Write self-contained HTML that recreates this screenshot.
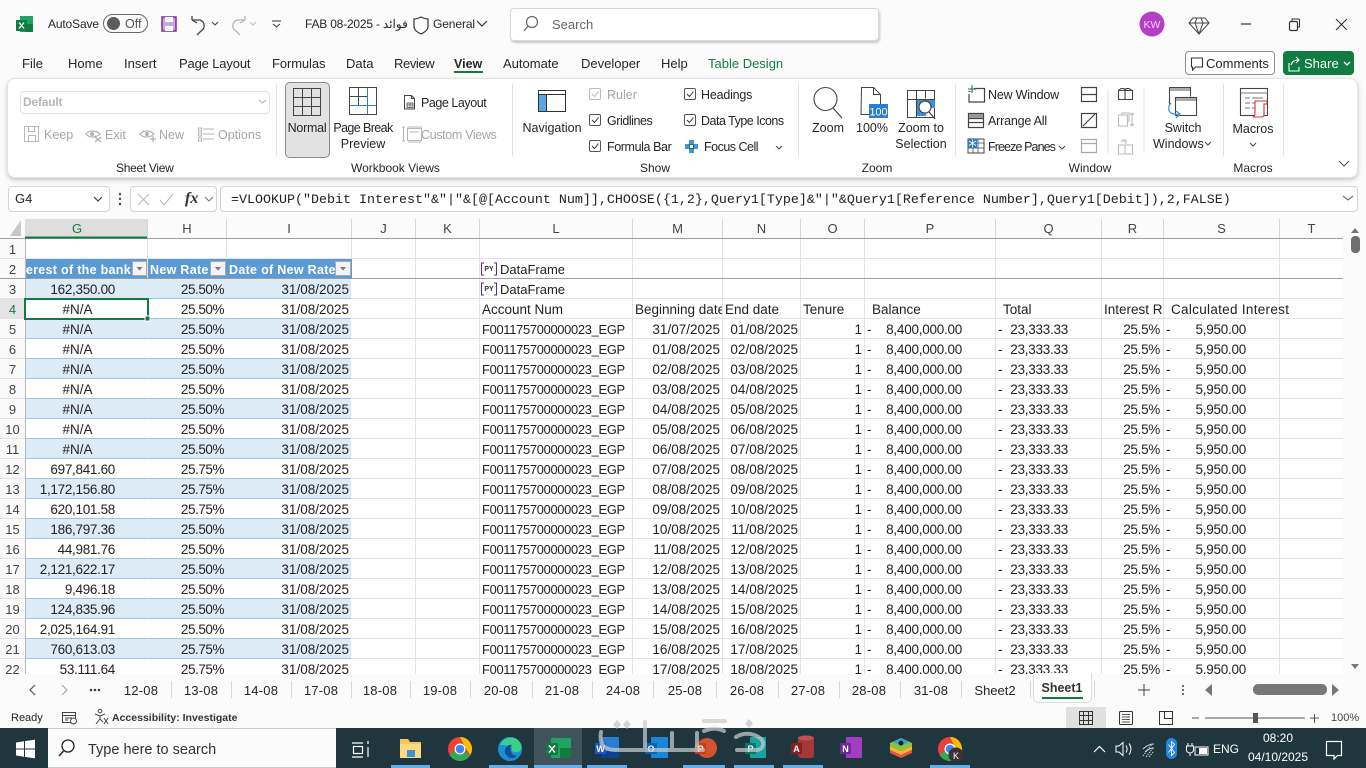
<!DOCTYPE html>
<html><head><meta charset="utf-8"><style>
html,body{margin:0;padding:0;width:1366px;height:768px;overflow:hidden;background:#fbfbfb;font-family:"Liberation Sans","Noto Sans CJK SC",sans-serif;color:#262626}
.t{position:absolute;white-space:nowrap;font-size:13px;line-height:16px}
.c{transform:translateX(-50%);text-align:center}
.g{color:#a6a6a6}
.s{font-size:12px}
.b{position:absolute;box-sizing:border-box}
.ch{position:absolute;top:219px;height:19px;line-height:20px;font-size:13px;text-align:center;color:#444;border-right:1px solid #d6d6d6;box-sizing:content-box}
#grid{position:absolute;left:0;top:239px;width:1343px;height:435px;overflow:hidden;background:#fff}
table{border-collapse:separate;border-spacing:0;table-layout:fixed;width:1344px;font-size:13.5px;color:#222}
td{height:17px;padding:2px 2px 0 2px;border-right:1px solid #e1e3e6;border-bottom:1px solid #e1e3e6;line-height:17px;white-space:nowrap;overflow:hidden;box-sizing:content-box;text-align:left}
td:nth-child(1){text-align:center;color:#444;border-right:1px solid #b8b8b8;background:#fafafa;font-size:13px;padding:2px 0 0 0}
td:nth-child(2){text-align:right;padding:2px 32px 0 0;letter-spacing:-.3px}
td.n{text-align:center!important;padding:2px 18px 0 0!important;letter-spacing:0}
td:nth-child(3){text-align:right;letter-spacing:-.45px}
td:nth-child(4){text-align:right}
tr.a td:nth-child(n+2):nth-child(-n+4){background:#ddebf7}
tr.r td:nth-child(n+2):nth-child(-n+4){border-bottom:1px solid #9dc3e6;border-right-color:#fff}
tr.r td:nth-child(2),tr.r td:nth-child(3){border-right:1px solid #e1e3e6}
tr.r.a td:nth-child(2),tr.r.a td:nth-child(3){border-right-color:#ddebf7}
tr.r td:nth-child(4){border-right:1px solid #9dc3e6}
td:nth-child(7){font-size:12.9px;letter-spacing:-.3px;padding-left:2px;padding-right:0}
td:nth-child(8),td:nth-child(9),td:nth-child(10){text-align:right}
td:nth-child(11){text-align:right;padding-right:33px;letter-spacing:-.25px}
td:nth-child(12){text-align:right;padding-right:33px;letter-spacing:-.25px}
td:nth-child(13){text-align:right;padding-right:3px;letter-spacing:-.3px}
td:nth-child(14){text-align:right;padding-right:33px;letter-spacing:-.25px}
td i{float:left;font-style:normal;margin-left:0}
svg{position:absolute;left:0;top:0}
</style></head><body>

<!-- Ribbon panel -->
<div class="b" style="left:7px;top:78px;width:1351px;height:100px;background:#fff;border:1px solid #e4e4e4;border-radius:8px;box-shadow:0 2px 4px rgba(0,0,0,.22)"></div>
<div class="b" style="left:510px;top:8px;width:369px;height:33px;background:#fff;border:1px solid #d8d8d8;border-radius:4px;box-shadow:1px 2px 2px rgba(0,0,0,.2)"></div>
<div class="b" style="left:20px;top:91px;width:250px;height:23px;background:#fff;border:1px solid #e0e0e0;border-radius:4px"></div>
<div class="b" style="left:285px;top:82px;width:45px;height:76px;background:#e2e2e2;border:1px solid #8a8a8a;border-radius:5px"></div>
<div class="b" style="left:1185px;top:51px;width:90px;height:24px;background:#fff;border:1px solid #8f8f8f;border-radius:4px"></div>
<div class="b" style="left:1283px;top:51px;width:71px;height:24px;background:#107c41;border-radius:4px"></div>

<!-- Title -->
<div class="t" style="left:48px;top:16px;font-size:12px;letter-spacing:-.15px">AutoSave</div>
<div class="t" style="left:125px;top:16px;font-size:12.5px;color:#555">Off</div>
<div class="t" style="left:305px;top:16px;font-size:12px;letter-spacing:-.2px">FAB 08-2025 - فوائد</div>
<div class="t" style="left:433px;top:16px;font-size:12px;letter-spacing:-.1px">General</div>
<div class="t" style="left:552px;top:17px;color:#666">Search</div>

<!-- Tabs -->
<div class="t" style="left:22px;top:56px">File</div>
<div class="t" style="left:68px;top:56px">Home</div>
<div class="t" style="left:124px;top:56px">Insert</div>
<div class="t" style="left:179px;top:56px;letter-spacing:-.15px">Page Layout</div>
<div class="t" style="left:272px;top:56px;letter-spacing:-.1px">Formulas</div>
<div class="t" style="left:346px;top:56px">Data</div>
<div class="t" style="left:394px;top:56px;letter-spacing:-.4px">Review</div>
<div class="t" style="left:454px;top:56px;font-weight:bold;font-size:12.5px">View</div>
<div class="b" style="left:454px;top:71px;width:29px;height:2px;background:#107c41"></div>
<div class="t" style="left:503px;top:56px">Automate</div>
<div class="t" style="left:581px;top:56px">Developer</div>
<div class="t" style="left:661px;top:56px">Help</div>
<div class="t" style="left:708px;top:56px;color:#107c41">Table Design</div>
<div class="t" style="left:1206px;top:56px">Comments</div>
<div class="t" style="left:1304px;top:56px;color:#fff">Share</div>

<!-- Ribbon text -->
<div class="t g" style="left:23px;top:94px;font-size:12px;font-weight:bold;color:#b5b5b5;letter-spacing:-.2px">Default</div>
<div class="t g" style="left:44px;top:127px;font-size:12.5px">Keep</div>
<div class="t g" style="left:105px;top:127px;font-size:12.5px">Exit</div>
<div class="t g" style="left:159px;top:127px;font-size:12.5px">New</div>
<div class="t g" style="left:218px;top:127px;font-size:12.5px">Options</div>
<div class="t s" style="left:116px;top:160px;letter-spacing:-.3px">Sheet View</div>
<div class="t s" style="left:351px;top:160px">Workbook Views</div>
<div class="t s c" style="left:655px;top:160px">Show</div>
<div class="t s c" style="left:877px;top:160px">Zoom</div>
<div class="t s c" style="left:1090px;top:160px">Window</div>
<div class="t s c" style="left:1253px;top:160px">Macros</div>
<div class="t c" style="left:307px;top:120px;font-size:12.5px;letter-spacing:-.25px">Normal</div>
<div class="t c" style="left:363px;top:120px;font-size:12.5px;letter-spacing:-.6px">Page Break</div>
<div class="t c" style="left:363px;top:136px;font-size:12.5px">Preview</div>
<div class="t" style="left:421px;top:95px;font-size:12.5px;letter-spacing:-.45px">Page Layout</div>
<div class="t g" style="left:421px;top:127px;font-size:12.5px;letter-spacing:-.35px">Custom Views</div>
<div class="t c" style="left:552px;top:120px;font-size:12.5px">Navigation</div>
<div class="t g" style="left:607px;top:87px;font-size:12.5px">Ruler</div>
<div class="t" style="left:607px;top:113px;font-size:12.5px;letter-spacing:-.45px">Gridlines</div>
<div class="t" style="left:607px;top:139px;font-size:12.5px;letter-spacing:-.4px">Formula Bar</div>
<div class="t" style="left:701px;top:87px;font-size:12.5px;letter-spacing:-.2px">Headings</div>
<div class="t" style="left:701px;top:113px;font-size:12.5px;letter-spacing:-.5px">Data Type Icons</div>
<div class="t" style="left:704px;top:139px;font-size:12.5px;letter-spacing:-.5px">Focus Cell</div>
<div class="t c" style="left:828px;top:120px;font-size:12.5px">Zoom</div>
<div class="t c" style="left:872px;top:120px;font-size:12.5px">100%</div>
<div class="t c" style="left:921px;top:120px;font-size:12.5px">Zoom to</div>
<div class="t c" style="left:921px;top:136px;font-size:12.5px">Selection</div>
<div class="t" style="left:988px;top:87px;font-size:12.5px;letter-spacing:-.2px">New Window</div>
<div class="t" style="left:988px;top:113px;font-size:12.5px;letter-spacing:-.2px">Arrange All</div>
<div class="t" style="left:988px;top:139px;font-size:12.5px;letter-spacing:-.9px">Freeze Panes</div>
<div class="t c" style="left:1183px;top:120px;font-size:12.5px">Switch</div>
<div class="t" style="left:1153px;top:136px;font-size:12.5px">Windows</div>
<div class="t c" style="left:1253px;top:121px;font-size:12.5px">Macros</div>

<!-- Formula bar -->
<div class="b" style="left:8px;top:186px;width:102px;height:26px;background:#fff;border:1px solid #d4d4d4;border-radius:4px"></div>
<div class="b" style="left:130px;top:186px;width:87px;height:26px;background:#fff;border:1px solid #d4d4d4;border-radius:4px"></div>
<div class="b" style="left:220px;top:186px;width:1138px;height:26px;background:#fff;border:1px solid #d4d4d4;border-radius:4px"></div>
<div class="t" style="left:15px;top:191px;font-size:13px">G4</div>
<div class="t" style="left:185px;top:190px;font:italic bold 16px/18px 'Liberation Serif',serif;color:#333">fx</div>
<div class="t" style="left:231px;top:193px;font:13.33px/16px 'Liberation Mono',monospace;color:#222">=VLOOKUP("Debit Interest"&amp;"|"&amp;[@[Account Num]],CHOOSE({1,2},Query1[Type]&amp;"|"&amp;Query1[Reference Number],Query1[Debit]),2,FALSE)</div>

<!-- Column headers -->
<div class="b" style="left:0;top:218px;width:1366px;height:21px;background:#fbfbfb"></div>
<div class="ch" style="left:25px;width:104px;padding-right:18px;background:#dedede;color:#107c41">G</div>
<div class="ch" style="left:148px;width:78px">H</div>
<div class="ch" style="left:227px;width:124px">I</div>
<div class="ch" style="left:352px;width:63px">J</div>
<div class="ch" style="left:416px;width:63px">K</div>
<div class="ch" style="left:480px;width:152px">L</div>
<div class="ch" style="left:633px;width:89px">M</div>
<div class="ch" style="left:723px;width:77px">N</div>
<div class="ch" style="left:801px;width:63px">O</div>
<div class="ch" style="left:865px;width:130px">P</div>
<div class="ch" style="left:996px;width:105px">Q</div>
<div class="ch" style="left:1102px;width:61px">R</div>
<div class="ch" style="left:1164px;width:115px">S</div>
<div class="ch" style="left:1280px;width:63px;border-right:0">T</div>

<!-- Grid -->
<div id="grid"><table>
<colgroup><col style="width:26px"><col style="width:122px"><col style="width:79px"><col style="width:125px"><col style="width:64px"><col style="width:64px"><col style="width:153px"><col style="width:90px"><col style="width:78px"><col style="width:64px"><col style="width:131px"><col style="width:106px"><col style="width:62px"><col style="width:116px"><col style="width:64px"></colgroup>
<tr><td>1</td><td></td><td></td><td></td><td></td><td></td><td></td><td></td><td></td><td></td><td></td><td></td><td></td><td></td><td></td></tr>
<tr><td>2</td><td style="background:#5b9bd5;border-bottom-color:#5b9bd5"></td><td style="background:#5b9bd5;border-right-color:#5b9bd5;border-bottom-color:#5b9bd5"></td><td style="background:#5b9bd5;border-right-color:#5b9bd5;border-bottom-color:#5b9bd5"></td><td></td><td></td><td style="padding-left:20px;font-size:13px;letter-spacing:0">DataFrame</td><td></td><td></td><td></td><td></td><td></td><td></td><td></td><td></td></tr>
<tr class="r a"><td>3</td><td>162,350.00</td><td>25.50%</td><td>31/08/2025</td><td></td><td></td><td style="padding-left:20px;font-size:13px;letter-spacing:0">DataFrame</td><td></td><td></td><td></td><td></td><td></td><td></td><td></td><td></td></tr>
<tr class="r"><td style="background:#e4e4e4;color:#107c41">4</td><td class="n">#N/A</td><td>25.50%</td><td>31/08/2025</td><td></td><td></td><td style="font-size:13.5px;letter-spacing:0">Account Num</td><td style="text-align:left">Beginning date</td><td style="text-align:left">End date</td><td style="text-align:left">Tenure</td><td style="text-align:left;padding-left:7px;padding-right:0;letter-spacing:0">Balance</td><td style="text-align:left;padding-left:7px;padding-right:0;letter-spacing:0">Total</td><td style="text-align:left;padding-right:0;letter-spacing:0">Interest Rate</td><td style="text-align:left;overflow:visible;padding-left:7px;padding-right:0;letter-spacing:.3px">Calculated Interest</td><td></td></tr>
<tr class="r a"><td>5</td><td class="n">#N/A</td><td>25.50%</td><td>31/08/2025</td><td></td><td></td><td>F001175700000023_EGP</td><td>31/07/2025</td><td>01/08/2025</td><td>1</td><td><i>-</i>8,400,000.00</td><td><i>-</i>23,333.33</td><td>25.5%</td><td><i>-</i>5,950.00</td><td></td></tr>
<tr class="r"><td>6</td><td class="n">#N/A</td><td>25.50%</td><td>31/08/2025</td><td></td><td></td><td>F001175700000023_EGP</td><td>01/08/2025</td><td>02/08/2025</td><td>1</td><td><i>-</i>8,400,000.00</td><td><i>-</i>23,333.33</td><td>25.5%</td><td><i>-</i>5,950.00</td><td></td></tr>
<tr class="r a"><td>7</td><td class="n">#N/A</td><td>25.50%</td><td>31/08/2025</td><td></td><td></td><td>F001175700000023_EGP</td><td>02/08/2025</td><td>03/08/2025</td><td>1</td><td><i>-</i>8,400,000.00</td><td><i>-</i>23,333.33</td><td>25.5%</td><td><i>-</i>5,950.00</td><td></td></tr>
<tr class="r"><td>8</td><td class="n">#N/A</td><td>25.50%</td><td>31/08/2025</td><td></td><td></td><td>F001175700000023_EGP</td><td>03/08/2025</td><td>04/08/2025</td><td>1</td><td><i>-</i>8,400,000.00</td><td><i>-</i>23,333.33</td><td>25.5%</td><td><i>-</i>5,950.00</td><td></td></tr>
<tr class="r a"><td>9</td><td class="n">#N/A</td><td>25.50%</td><td>31/08/2025</td><td></td><td></td><td>F001175700000023_EGP</td><td>04/08/2025</td><td>05/08/2025</td><td>1</td><td><i>-</i>8,400,000.00</td><td><i>-</i>23,333.33</td><td>25.5%</td><td><i>-</i>5,950.00</td><td></td></tr>
<tr class="r"><td>10</td><td class="n">#N/A</td><td>25.50%</td><td>31/08/2025</td><td></td><td></td><td>F001175700000023_EGP</td><td>05/08/2025</td><td>06/08/2025</td><td>1</td><td><i>-</i>8,400,000.00</td><td><i>-</i>23,333.33</td><td>25.5%</td><td><i>-</i>5,950.00</td><td></td></tr>
<tr class="r a"><td>11</td><td class="n">#N/A</td><td>25.50%</td><td>31/08/2025</td><td></td><td></td><td>F001175700000023_EGP</td><td>06/08/2025</td><td>07/08/2025</td><td>1</td><td><i>-</i>8,400,000.00</td><td><i>-</i>23,333.33</td><td>25.5%</td><td><i>-</i>5,950.00</td><td></td></tr>
<tr class="r"><td>12</td><td>697,841.60</td><td>25.75%</td><td>31/08/2025</td><td></td><td></td><td>F001175700000023_EGP</td><td>07/08/2025</td><td>08/08/2025</td><td>1</td><td><i>-</i>8,400,000.00</td><td><i>-</i>23,333.33</td><td>25.5%</td><td><i>-</i>5,950.00</td><td></td></tr>
<tr class="r a"><td>13</td><td>1,172,156.80</td><td>25.75%</td><td>31/08/2025</td><td></td><td></td><td>F001175700000023_EGP</td><td>08/08/2025</td><td>09/08/2025</td><td>1</td><td><i>-</i>8,400,000.00</td><td><i>-</i>23,333.33</td><td>25.5%</td><td><i>-</i>5,950.00</td><td></td></tr>
<tr class="r"><td>14</td><td>620,101.58</td><td>25.75%</td><td>31/08/2025</td><td></td><td></td><td>F001175700000023_EGP</td><td>09/08/2025</td><td>10/08/2025</td><td>1</td><td><i>-</i>8,400,000.00</td><td><i>-</i>23,333.33</td><td>25.5%</td><td><i>-</i>5,950.00</td><td></td></tr>
<tr class="r a"><td>15</td><td>186,797.36</td><td>25.50%</td><td>31/08/2025</td><td></td><td></td><td>F001175700000023_EGP</td><td>10/08/2025</td><td>11/08/2025</td><td>1</td><td><i>-</i>8,400,000.00</td><td><i>-</i>23,333.33</td><td>25.5%</td><td><i>-</i>5,950.00</td><td></td></tr>
<tr class="r"><td>16</td><td>44,981.76</td><td>25.50%</td><td>31/08/2025</td><td></td><td></td><td>F001175700000023_EGP</td><td>11/08/2025</td><td>12/08/2025</td><td>1</td><td><i>-</i>8,400,000.00</td><td><i>-</i>23,333.33</td><td>25.5%</td><td><i>-</i>5,950.00</td><td></td></tr>
<tr class="r a"><td>17</td><td>2,121,622.17</td><td>25.50%</td><td>31/08/2025</td><td></td><td></td><td>F001175700000023_EGP</td><td>12/08/2025</td><td>13/08/2025</td><td>1</td><td><i>-</i>8,400,000.00</td><td><i>-</i>23,333.33</td><td>25.5%</td><td><i>-</i>5,950.00</td><td></td></tr>
<tr class="r"><td>18</td><td>9,496.18</td><td>25.50%</td><td>31/08/2025</td><td></td><td></td><td>F001175700000023_EGP</td><td>13/08/2025</td><td>14/08/2025</td><td>1</td><td><i>-</i>8,400,000.00</td><td><i>-</i>23,333.33</td><td>25.5%</td><td><i>-</i>5,950.00</td><td></td></tr>
<tr class="r a"><td>19</td><td>124,835.96</td><td>25.50%</td><td>31/08/2025</td><td></td><td></td><td>F001175700000023_EGP</td><td>14/08/2025</td><td>15/08/2025</td><td>1</td><td><i>-</i>8,400,000.00</td><td><i>-</i>23,333.33</td><td>25.5%</td><td><i>-</i>5,950.00</td><td></td></tr>
<tr class="r"><td>20</td><td>2,025,164.91</td><td>25.50%</td><td>31/08/2025</td><td></td><td></td><td>F001175700000023_EGP</td><td>15/08/2025</td><td>16/08/2025</td><td>1</td><td><i>-</i>8,400,000.00</td><td><i>-</i>23,333.33</td><td>25.5%</td><td><i>-</i>5,950.00</td><td></td></tr>
<tr class="r a"><td>21</td><td>760,613.03</td><td>25.75%</td><td>31/08/2025</td><td></td><td></td><td>F001175700000023_EGP</td><td>16/08/2025</td><td>17/08/2025</td><td>1</td><td><i>-</i>8,400,000.00</td><td><i>-</i>23,333.33</td><td>25.5%</td><td><i>-</i>5,950.00</td><td></td></tr>
<tr class="r"><td>22</td><td>53,111.64</td><td>25.75%</td><td>31/08/2025</td><td></td><td></td><td>F001175700000023_EGP</td><td>17/08/2025</td><td>18/08/2025</td><td>1</td><td><i>-</i>8,400,000.00</td><td><i>-</i>23,333.33</td><td>25.5%</td><td><i>-</i>5,950.00</td><td></td></tr>
</table></div>

<!-- Table header text -->
<div class="t" style="left:24px;top:262px;width:107px;overflow:hidden;color:#fff;font-weight:bold;font-size:12.5px;letter-spacing:.3px;direction:rtl;text-align:left"><span style="unicode-bidi:plaintext">Interest of the bank</span></div>
<div class="t" style="left:150px;top:262px;color:#fff;font-weight:bold;font-size:12.5px;letter-spacing:.3px;width:60px;overflow:hidden">New Rate</div>
<div class="t" style="left:229px;top:262px;color:#fff;font-weight:bold;font-size:12.5px;letter-spacing:.3px;width:106px;overflow:hidden">Date of New Rate</div>

<!-- Tabs bar -->
<div class="b" style="left:0;top:674px;width:1366px;height:54px;background:#fbfbfb"></div>
<div class="t c" style="left:141px;top:683px;letter-spacing:.2px">12-08</div>
<div class="t c" style="left:201px;top:683px;letter-spacing:.2px">13-08</div>
<div class="t c" style="left:261px;top:683px;letter-spacing:.2px">14-08</div>
<div class="t c" style="left:321px;top:683px;letter-spacing:.2px">17-08</div>
<div class="t c" style="left:380px;top:683px;letter-spacing:.2px">18-08</div>
<div class="t c" style="left:440px;top:683px;letter-spacing:.2px">19-08</div>
<div class="t c" style="left:501px;top:683px;letter-spacing:.2px">20-08</div>
<div class="t c" style="left:562px;top:683px;letter-spacing:.2px">21-08</div>
<div class="t c" style="left:623px;top:683px;letter-spacing:.2px">24-08</div>
<div class="t c" style="left:685px;top:683px;letter-spacing:.2px">25-08</div>
<div class="t c" style="left:747px;top:683px;letter-spacing:.2px">26-08</div>
<div class="t c" style="left:808px;top:683px;letter-spacing:.2px">27-08</div>
<div class="t c" style="left:869px;top:683px;letter-spacing:.2px">28-08</div>
<div class="t c" style="left:931px;top:683px;letter-spacing:.2px">31-08</div>
<div class="t c" style="left:995px;top:683px">Sheet2</div>
<div class="b" style="left:1033px;top:673px;width:59px;height:30px;background:#fff;border:1px solid #dcdcdc;border-top:0;border-radius:0 0 5px 5px"></div>
<div class="t c" style="left:1062px;top:680px;font-weight:bold;font-size:12.5px;color:#333">Sheet1</div>
<div class="b" style="left:1042px;top:697px;width:41px;height:2px;background:#107c41"></div>

<!-- Status bar -->
<div class="t" style="left:11px;top:710px;font-size:11px">Ready</div>
<div class="t" style="left:112px;top:710px;font-size:10.5px;font-weight:bold;color:#333">Accessibility: Investigate</div>
<div class="b" style="left:1066px;top:707px;width:40px;height:21px;background:#e0e0e0"></div>
<div class="t" style="left:1331px;top:710px;font-size:11px;color:#444">100%</div>

<!-- Taskbar -->
<div class="b" style="left:0;top:728px;width:1366px;height:40px;background:#20363f"></div>
<div class="b" style="left:48px;top:728px;width:288px;height:40px;background:#fbfbfb;border:1px solid #c8c8c8;border-width:1px 0"></div>
<div class="b" style="left:534px;top:728px;width:48px;height:40px;background:#3e535c"></div>
<div class="t" style="left:88px;top:742px;font-size:14.5px;color:#333">Type here to search</div>
<div class="t" style="left:1213px;top:741px;font-size:12px;color:#fff">ENG</div>
<div class="t c" style="left:1278px;top:730px;font-size:12px;color:#fff">08:20</div>
<div class="t c" style="left:1278px;top:749px;font-size:12px;color:#fff">04/10/2025</div>

<svg width="1366" height="768" viewBox="0 0 1366 768" fill="none">
<!-- Excel logo -->
<rect x="20" y="16" width="13" height="16" fill="#21a366"/><rect x="25" y="24" width="8" height="8" fill="#107c41"/><rect x="16" y="20" width="11" height="11" fill="#107c41"/><path d="M19 22.500l5 6M24 22.500l-5 6" stroke="#fff" stroke-width="1.300"/>
<!-- Toggle -->
<rect x="103.500" y="14.500" width="44" height="18" rx="9" stroke="#666"/><circle cx="113.500" cy="23.500" r="6.500" fill="#5c5c5c"/>
<!-- Save -->
<path d="M162 17h14l0 0v14h-14z" fill="#c9a6dd" stroke="#7b2f9e" stroke-width="1.500"/><rect x="165" y="17" width="8" height="5" fill="#fff"/><rect x="165" y="26" width="8" height="5" fill="#fff"/>
<!-- Undo Redo -->
<path d="M192 20h8a6 6 0 0 1 1 11l-4 4M192 20l0-4M192 20l5 3" stroke="#444" stroke-width="1.300"/><path d="M212 22l3 3 3-3" stroke="#444"/>
<path d="M245 20h-8a6 6 0 0 0-1 11l4 4M245 20l0-4M245 20l-5 3" stroke="#b5b5b5" stroke-width="1.300"/><path d="M250 22l3 3 3-3" stroke="#c0c0c0"/>
<path d="M272 21h9M273 24l3.500 3 3.500-3" stroke="#333"/>
<!-- Shield, chevron -->
<path d="M421 17c2 1 5 2 7 2v7c0 4-3 6-7 8-4-2-7-4-7-8v-7c2 0 5-1 7-2z" stroke="#333" stroke-width="1.200"/><path d="M477 21l5 5 5-5" stroke="#333" stroke-width="1.200"/>
<!-- Search -->
<circle cx="532" cy="22" r="5.500" stroke="#666" stroke-width="1.200"/><path d="M528 26l-4 5" stroke="#666" stroke-width="1.200"/>
<!-- Profile -->
<circle cx="1152" cy="24" r="12.500" fill="#b63dc8"/><text x="1152" y="28" font-family="Liberation Sans" font-size="10.500" fill="#f0d8f5" text-anchor="middle">KW</text>
<!-- Diamond -->
<path d="M1193 18h12l4 5-10 11-10-11zM1189 23h20M1195 23l4 11 4-11M1195 23l2-5M1203 23l-2-5" stroke="#444" stroke-width="1"/>
<!-- Window controls -->
<path d="M1241 24h10" stroke="#333" stroke-width="1.200"/><rect x="1289.500" y="21.500" width="8" height="9" rx="1.500" stroke="#333" stroke-width="1.200"/><path d="M1292 21v-2h6.500a1 1 0 0 1 1 1v7h-2" stroke="#333"/><path d="M1336 19l11 11M1347 19l-11 11" stroke="#333" stroke-width="1.100"/>
<!-- Comments/share icons -->
<path d="M1191.500 58h11v9h-7l-3 3v-3h-1z" stroke="#333" stroke-width="1.100"/>
<path d="M1289 63v8h10v-4M1291 65c1-3 3-5 7-5M1296 57l3 3-3 3" stroke="#fff" stroke-width="1.100"/><path d="M1344 62l3 3 3-3" stroke="#fff" stroke-width="1.300"/>
<!-- Default chevron -->
<path d="M259 100l3.500 3 3.500-3" stroke="#aaa"/>
<!-- Sheet view icons -->
<rect x="24.500" y="126.500" width="14" height="15" stroke="#b8b8b8"/><rect x="28.500" y="126.500" width="6" height="5" stroke="#b8b8b8"/><rect x="28.500" y="135.500" width="7" height="6" stroke="#b8b8b8"/>
<path d="M86 134c3-4 10-4 14 0-4 4-11 4-14 0zM95 137l6 5M101 137l-6 5" stroke="#b0b0b0" stroke-width="1.200"/><circle cx="92" cy="134" r="2" fill="#b0b0b0"/>
<path d="M140 134c3-4 10-4 14 0-4 4-11 4-14 0zM150 139h6M153 136v6" stroke="#b0b0b0" stroke-width="1.200"/><circle cx="147" cy="134" r="2" fill="#b0b0b0"/>
<path d="M203 129h11M203 134h11M203 139h11M198.500 128h3v3h-3zM198.500 133h3v3h-3zM198.500 138h3v3h-3z" stroke="#b5b5b5"/>
<!-- Normal icon -->
<path d="M293.500 88.500h27v27h-27zM302.500 88.500v27M311.500 88.500v27M293.500 97.500h27M293.500 106.500h27" stroke="#444"/>
<!-- Page break -->
<path d="M349.500 87.500h27v27h-27zM358.500 87.500v18M349.500 96.500h18" stroke="#444"/><path d="M367.500 87.500v27M349.500 105.500h27" stroke="#2b7cd3"/>
<!-- Page Layout icon -->
<path d="M404.500 95.500h7l3 3v10.500h-10zM411.500 95.500v3h3" stroke="#444"/><path d="M407 103h6v4.500h-6zM410 103v4.500M407 105h6" stroke="#444" stroke-width=".8"/>
<!-- Custom views -->
<path d="M402 127h3M402 141h3M403.500 127v14M408 128v-1h13v1M408 142h13M407.500 128.500h14v12h-14zM410 132h9" stroke="#b8b8b8"/>
<!-- Navigation -->
<rect x="538.500" y="90.500" width="27" height="21" stroke="#333"/><rect x="538.500" y="90.500" width="27" height="4" stroke="#333" fill="#fff"/><rect x="539" y="95" width="7" height="16" fill="#5ba7e6"/><path d="M546.500 95v16" stroke="#333"/>
<!-- Checkboxes -->
<g stroke-width="1"><rect x="589.500" y="88.500" width="11" height="11" rx="1.500" stroke="#bbb"/><path d="M592 94l2.500 2.500 4-5" stroke="#bbb"/>
<rect x="589.500" y="114.500" width="11" height="11" rx="1.500" stroke="#555"/><path d="M592 120l2.500 2.500 4-5" stroke="#333"/>
<rect x="589.500" y="140.500" width="11" height="11" rx="1.500" stroke="#555"/><path d="M592 146l2.500 2.500 4-5" stroke="#333"/>
<rect x="684.500" y="88.500" width="11" height="11" rx="1.500" stroke="#555"/><path d="M687 94l2.500 2.500 4-5" stroke="#333"/>
<rect x="684.500" y="114.500" width="11" height="11" rx="1.500" stroke="#555"/><path d="M687 120l2.500 2.500 4-5" stroke="#333"/></g>
<!-- Focus cell -->
<path d="M689 140h5v4h4v5h-4v4h-5v-4h-4v-5h4z" fill="#3f97de"/><rect x="689.500" y="144.500" width="4" height="4" fill="#fff" stroke="#107c41"/>
<path d="M776 146l3 3 3-3" stroke="#444"/>
<!-- Zoom icons -->
<circle cx="825.500" cy="99" r="11.500" stroke="#444" stroke-width="1.100"/><path d="M833 108l9 10" stroke="#444" stroke-width="1.200"/>
<path d="M861.500 87.500h12l7 7v20h-19.500zM873.500 87.500v7h7" stroke="#444"/><rect x="869" y="104" width="19" height="14" fill="#2b7cd3"/><text x="878.500" y="115.500" font-family="Liberation Sans" font-size="11" fill="#fff" text-anchor="middle">100</text>
<path d="M907.500 90.500h27v27h-27zM907.500 99.500h27M916.500 90.500v27M925.500 90.500v8" stroke="#444"/><rect x="917" y="100" width="18" height="8" fill="#3b90de"/><rect x="917" y="100" width="9" height="16" fill="#3b90de"/><circle cx="925" cy="107" r="6" fill="#fff" stroke="#444" stroke-width="1.200"/><path d="M929 112l6 7" stroke="#444" stroke-width="1.200"/>
<!-- Window group icons -->
<path d="M968.500 91.500h2M974 88.500h10.500v13.500h-15.500v-8" stroke="#444" stroke-width="1.200"/><path d="M968 89h8M972 85v8" stroke="#107c41" stroke-width="1.100"/>
<path d="M968.500 113.500h15v14h-15zM968.500 118.500h15M968.500 122.500h15" stroke="#444" stroke-width="1.200"/><rect x="969" y="114" width="14" height="4" fill="#999"/>
<g><rect x="968" y="139" width="16" height="14" fill="#fff" stroke="#444"/><path d="M968 143h16M968 148h16M973 139v14M978 139v14" stroke="#444" stroke-width=".8"/><rect x="968" y="139" width="9" height="9" fill="#2b7cd3"/><path d="M972.500 139.500v8M969 141l7 4.500M976 141l-7 4.500" stroke="#fff" stroke-width=".8"/></g>
<path d="M1059 146l3 3 3-3" stroke="#444"/>
<path d="M1081.500 87.500h15v14h-15zM1081.500 94.500h15" stroke="#444" stroke-width="1.200"/>
<path d="M1081.500 113.500h15v14h-15zM1083 126l12-12" stroke="#444" stroke-width="1.200"/>
<path d="M1081.500 139.500h15v13h-15zM1081.500 143.500h15" stroke="#aaa" stroke-width="1.200"/>
<path d="M1108 89v64" stroke="#e0e0e0"/><path d="M1144 89v64" stroke="#e0e0e0"/>
<path d="M1118.500 90.500h6.500v9h-6.500zM1125 90.500h7.500v9h-7.500zM1118.500 90.500l2.500-2h3l1 2M1125 90.500l1-2h3l3 2" stroke="#444" stroke-width="1.100"/>
<path d="M1118.500 115h9v11h-9zM1122 115v-2h7v9M1132 113v13M1130 115l2-2 2 2M1130 124l2 2 2-2" stroke="#bbb" stroke-width="1.100"/>
<path d="M1118.500 145h6.500v9h-6.500zM1125 145h7.500v9h-7.500zM1121 142l2-2 2 2M1123 140h3v4" stroke="#bbb" stroke-width="1.100"/>
<!-- Switch windows -->
<path d="M1169.500 87.500h21v9M1169.500 87.500v17M1169.500 100" stroke="#444" stroke-width="1.100"/><rect x="1170" y="88" width="20" height="3" fill="#aaa"/>
<rect x="1175.500" y="97.500" width="21" height="18" stroke="#444" stroke-width="1.100"/><rect x="1176" y="98" width="20" height="3" fill="#aaa"/>
<path d="M1171 103c-3 3-3 8 0 10 2 1 5 2 9 1M1176 111l4 3-4 4" stroke="#3f97de" stroke-width="1.300"/>
<path d="M1205 142l3 3 3-3" stroke="#444"/>
<!-- Macros -->
<rect x="1240.500" y="88.500" width="27" height="27" stroke="#444" stroke-width="1.100"/><path d="M1240.500 93h27M1245 98h5M1252 98h11M1245 103h5M1252 103h6M1245 108h5M1252 108h4" stroke="#777"/>
<path d="M1255 101h12v3h-3v11c0 2-2 2-3 2h-8c2-1 2-2 2-3z" fill="#fff" stroke="#d9342b" stroke-width="1.100"/>
<path d="M1250 143l3 3 3-3" stroke="#444"/>
<path d="M1339 161l5 5 5-5" stroke="#555" stroke-width="1.100"/>
<!-- Ribbon dividers -->
<path d="M276.500 84v72M512.500 84v72M798.500 84v72M955.500 84v72M1223.500 84v72M1283.500 84v72" stroke="#e2e2e2"/>
<!-- Formula icons -->
<path d="M94 197l4 4 4-4" stroke="#444" stroke-width="1.200"/>
<circle cx="120" cy="194" r="1.200" fill="#444"/><circle cx="120" cy="199" r="1.200" fill="#444"/><circle cx="120" cy="204" r="1.200" fill="#444"/>
<path d="M138 194l11 11M149 194l-11 11" stroke="#b8b8b8" stroke-width="1.100"/><path d="M160 200l4 5 9-11" stroke="#b8b8b8" stroke-width="1.100"/>
<path d="M205 197l4 4 4-4" stroke="#777"/><path d="M1343 196l5 4 5-4" stroke="#555"/>
<!-- Corner select -->
<path d="M21 220v16H10z" fill="#c8c8c8"/>
<path d="M0 238.500h1343" stroke="#9e9e9e"/><path d="M25 237.500h122" stroke="#107c41" stroke-width="2"/>
<path d="M0 278.500h1343" stroke="#9e9e9e"/>
<!-- Filter buttons -->
<g fill="#f3f3f3" stroke="#aaa"><rect x="132.500" y="261.500" width="14" height="14"/><rect x="210.500" y="261.500" width="15" height="14"/><rect x="335.500" y="261.500" width="15" height="14"/></g>
<path d="M136.500 267h6l-3 3.500zM215 267h6l-3 3.500zM340 267h6l-3 3.500z" fill="#777"/>
<!-- DataFrame icons -->
<g stroke="#5b2a7c" stroke-width="1"><path d="M484 263h-2.500v12h2.500M494 263h2.500v12H494M484 283h-2.500v12h2.500M494 283h2.500v12H494"/></g>
<text x="489" y="271" font-family="Liberation Sans" font-size="7" font-weight="bold" fill="#333" text-anchor="middle">PY</text><text x="489" y="291" font-family="Liberation Sans" font-size="7" font-weight="bold" fill="#333" text-anchor="middle">PY</text>
<!-- Selection -->
<rect x="25" y="299" width="123" height="20" stroke="#107c41" stroke-width="2"/><rect x="145" y="316" width="5" height="5" fill="#107c41" stroke="#fff"/>
<!-- Scrollbar -->
<path d="M1351 233l4-5 4 5z" fill="#777"/><rect x="1351" y="236" width="9" height="17" rx="4" fill="#6f6f6f"/><path d="M1351 664l4 5 4-5z" fill="#777"/>
<!-- Sheet nav -->
<path d="M35 685l-5 5 5 5" stroke="#555" stroke-width="1.200"/><path d="M62 685l5 5-5 5" stroke="#aaa" stroke-width="1.200"/>
<circle cx="91" cy="690" r="1.300" fill="#444"/><circle cx="95" cy="690" r="1.300" fill="#444"/><circle cx="99" cy="690" r="1.300" fill="#444"/>
<path d="M171.500 681v17M231.500 681v17M291.500 681v17M351.500 681v17M410.500 681v17M470.500 681v17M532.500 681v17M592.500 681v17M653.500 681v17M716.500 681v17M778.500 681v17M839.500 681v17M900.500 681v17M961.500 681v17M1030.500 681v17M1094.500 681v17" stroke="#d8d8d8"/>
<path d="M1138 690h12M1144 684v12" stroke="#444"/>
<circle cx="1183" cy="686" r="1" fill="#444"/><circle cx="1183" cy="690" r="1" fill="#444"/><circle cx="1183" cy="694" r="1" fill="#444"/>
<path d="M1212 684v12l-7-6z" fill="#777"/><rect x="1253" y="684" width="74" height="11" rx="5" fill="#777"/><path d="M1332 684v12l7-6z" fill="#777"/>
<!-- Status icons -->
<path d="M62.500 712.500h13v3h-13zM62.500 715.500v7h8M75.500 715.500v3M65 718h7M65 720h3" stroke="#444"/><circle cx="73.500" cy="721" r="3" stroke="#444"/>
<circle cx="100" cy="711" r="1.800" stroke="#444"/><path d="M95 714l5 2 5-2M100 716v3l-4 5M100 719l3 3M104 718l4 6M108 718l-4 6" stroke="#444"/>
<!-- Views -->
<path d="M1079.500 711.500h13v13h-13zM1083.500 711.500v13M1088.500 711.500v13M1079.500 715.500h13M1079.500 720.500h13" stroke="#333"/>
<rect x="1119.500" y="711.500" width="13" height="13" rx="1" stroke="#333"/><path d="M1122 714.500h8M1122 717h8M1122 719.500h8M1122 722h8" stroke="#555" stroke-width=".9"/>
<path d="M1159.500 711.500h13v13h-13zM1164.500 711.500v7h8" stroke="#333"/>
<path d="M1192 718h7M1205 718h100M1310 718h9M1314.500 714v9" stroke="#555"/><rect x="1253" y="713" width="5" height="10" fill="#555"/>
<!-- Start -->
<path d="M16 742.500l8-1.200v7.200h-8zM25 741.100l10-1.500v8.900H25zM16 749.500h8v7.200l-8-1.200zM25 749.500h10v8.900l-10-1.500z" fill="#fff"/>
<circle cx="68" cy="746" r="6" stroke="#222" stroke-width="1.300"/><path d="M63.500 751l-4.500 5" stroke="#222" stroke-width="1.500"/>
<!-- Task view -->
<path d="M352 743h11M352 757h11M353.500 746.500h9v7h-9zM368 741v3M368 747v10" stroke="#fff" stroke-width="1.200"/>
<!-- Folder -->
<path d="M400 739h8l2 3h11v16h-21z" fill="#f6c65b"/><rect x="400" y="744" width="21" height="14" fill="#fbd97e"/><rect x="407" y="750" width="8" height="7" fill="#3f8fde"/>
<!-- Chrome -->
<g><circle cx="460" cy="749" r="12" fill="#ea4335"/><path d="M460 749l10.400 6a12 12 0 0 1-16.400 4.400 12 12 0 0 1-4.400-4.400l5 -4z" fill="#34a853"/><path d="M460 737a12 12 0 0 1 10.400 18L465 747z" fill="#fbbc05"/><circle cx="460" cy="749" r="5.500" fill="#fff"/><circle cx="460" cy="749" r="4.300" fill="#4285f4"/></g>
<!-- Edge -->
<circle cx="510" cy="749" r="12" fill="#1b8fd6"/><path d="M500 745c3-8 14-10 19-4 4 4 3 10-1 11-5 1-7-1-6-4-3-3-9-3-12-3z" fill="#3ad08a"/><path d="M505 753c-1-5 3-9 7-8-3 3-2 10 5 11-4 4-10 2-12-3z" fill="#0b4f9e"/>
<!-- Excel -->
<rect x="551" y="738" width="20" height="20" rx="1" fill="#21a366"/><rect x="560" y="748" width="11" height="10" fill="#107c41"/><rect x="546" y="743" width="12" height="12" fill="#107c41"/><path d="M549 745.500l6 7M555 745.500l-6 7" stroke="#fff" stroke-width="1.400"/>
<!-- Word -->
<rect x="601" y="737" width="18" height="21" rx="1" fill="#2b7cd3"/><rect x="601" y="751" width="18" height="7" fill="#103f91"/><rect x="595" y="743" width="11" height="11" fill="#185abd"/><text x="600.500" y="752" font-family="Liberation Sans" font-size="9" font-weight="bold" fill="#fff" text-anchor="middle">W</text>
<!-- Outlook -->
<rect x="651" y="737" width="17" height="21" rx="1" fill="#1a86d9"/><rect x="645" y="743" width="12" height="11" fill="#0f5fb3"/><text x="651" y="752" font-family="Liberation Sans" font-size="9" font-weight="bold" fill="#fff" text-anchor="middle">O</text>
<!-- PowerPoint -->
<circle cx="707" cy="748" r="10" fill="#d35230"/><rect x="695" y="743" width="11" height="11" fill="#c43e1c"/><text x="700.500" y="752" font-family="Liberation Sans" font-size="9" font-weight="bold" fill="#fff" text-anchor="middle">P</text>
<!-- Publisher -->
<rect x="750" y="737" width="16" height="21" rx="1" fill="#17a2a0"/><rect x="745" y="743" width="11" height="11" fill="#077568"/><text x="750.500" y="752" font-family="Liberation Sans" font-size="9" font-weight="bold" fill="#fff" text-anchor="middle">P</text>
<!-- Access -->
<rect x="798" y="737" width="16" height="21" rx="3" fill="#a4373a"/><ellipse cx="806" cy="738" rx="8" ry="2.500" fill="#c4504f"/><rect x="791" y="743" width="11" height="11" fill="#841f23"/><text x="796.500" y="752" font-family="Liberation Sans" font-size="9" font-weight="bold" fill="#fff" text-anchor="middle">A</text>
<!-- OneNote -->
<rect x="846" y="737" width="16" height="21" rx="1" fill="#a33dc2"/><rect x="840" y="743" width="11" height="11" fill="#6a2a98"/><text x="845.500" y="752" font-family="Liberation Sans" font-size="9" font-weight="bold" fill="#fff" text-anchor="middle">N</text>
<!-- BlueStacks -->
<path d="M890 743l11-5 11 5v3l-11 5-11-5z" fill="#8ac43f"/><path d="M890 746l11 5 11-5v4l-11 5-11-5z" fill="#f2b632"/><path d="M890 750l11 5 11-5v3l-11 5-11-5z" fill="#e4573d"/><path d="M893 742l8-4 8 4-8 4z" fill="#2fa5df"/><circle cx="901" cy="743" r="2.500" fill="#222"/>
<!-- Chrome profile -->
<circle cx="950" cy="749" r="12" fill="#ea4335"/><path d="M950 749l10.400 6a12 12 0 0 1-16.400 4.400 12 12 0 0 1-4.400-4.400l5-4z" fill="#34a853"/><path d="M950 737a12 12 0 0 1 10.400 18L955 747z" fill="#fbbc05"/><circle cx="950" cy="749" r="5.500" fill="#fff"/><circle cx="950" cy="749" r="4.300" fill="#4285f4"/><circle cx="956" cy="755" r="7.500" fill="#3a3036"/><text x="956" y="759" font-family="Liberation Sans" font-size="9" fill="#fff" text-anchor="middle">K</text>
<!-- Watermark -->
<g stroke="#c8cccd" stroke-width="4" opacity=".72" stroke-linecap="round"><path d="M601 732c-2 12 3 18 14 18h88M645 722v28M672 733v17M697 733v12c0 3-1 5-3 5M704 731c7-3 14-3 20 0M704 721h21M737 750h20c7-1 8-8 3-12-7-5-16-6-24-1"/></g>
<path d="M617 720l4 4.500-4 4.500-4-4.500zM627 720l4 4.500-4 4.500-4-4.500zM749 719l4 4.500-4 4.500-4-4.500z" fill="#c8cccd" opacity=".85"/>
<!-- Underlines -->
<path d="M391 766.500h39M489 766.500h39M534 766.500h48M587 766.500h40M683 766.500h42M734 766.500h40M783 766.500h40M930 766.500h40" stroke="#63aee8" stroke-width="3"/>
<!-- Tray -->
<path d="M1094 752l5.500-5.500 5.500 5.500" stroke="#fff" stroke-width="1.200"/>
<path d="M1116 746h3l4-3.500v13l-4-3.500h-3zM1126 745.500c1.500 2 1.500 5 0 7M1129 743.500c2.500 3 2.500 8 0 11" stroke="#fff" stroke-width="1"/>
<path d="M1143 756l9-12M1146 757l7-9M1149 757l4-5" stroke="#cfd6d9" stroke-width="1" stroke-dasharray="1.500 1"/><path d="M1143 749c3-3 7-5 11-5M1145 752c2-2 5-4 9-4" stroke="#cfd6d9"/>
<rect x="1166" y="738" width="11" height="21" rx="5.500" fill="#1e88e5"/><path d="M1168.500 744.500l6 8-3 3v-14l3 3-6 8" stroke="#fff" stroke-width=".9"/>
<path d="M1188 743v3M1192 743v3M1186.500 746h7v4c0 2-2 3-3.500 3s-3.500-1-3.500-3zM1190 753v3M1195 747h13v8h-13z" stroke="#fff"/><rect x="1199" y="748" width="8" height="6" fill="#fff"/>
<path d="M1326.500 741.500h15v14h-4l-3.500 3.500v-3.500h-7.500z" stroke="#fff" stroke-width="1.200"/>
</svg>
</body></html>
